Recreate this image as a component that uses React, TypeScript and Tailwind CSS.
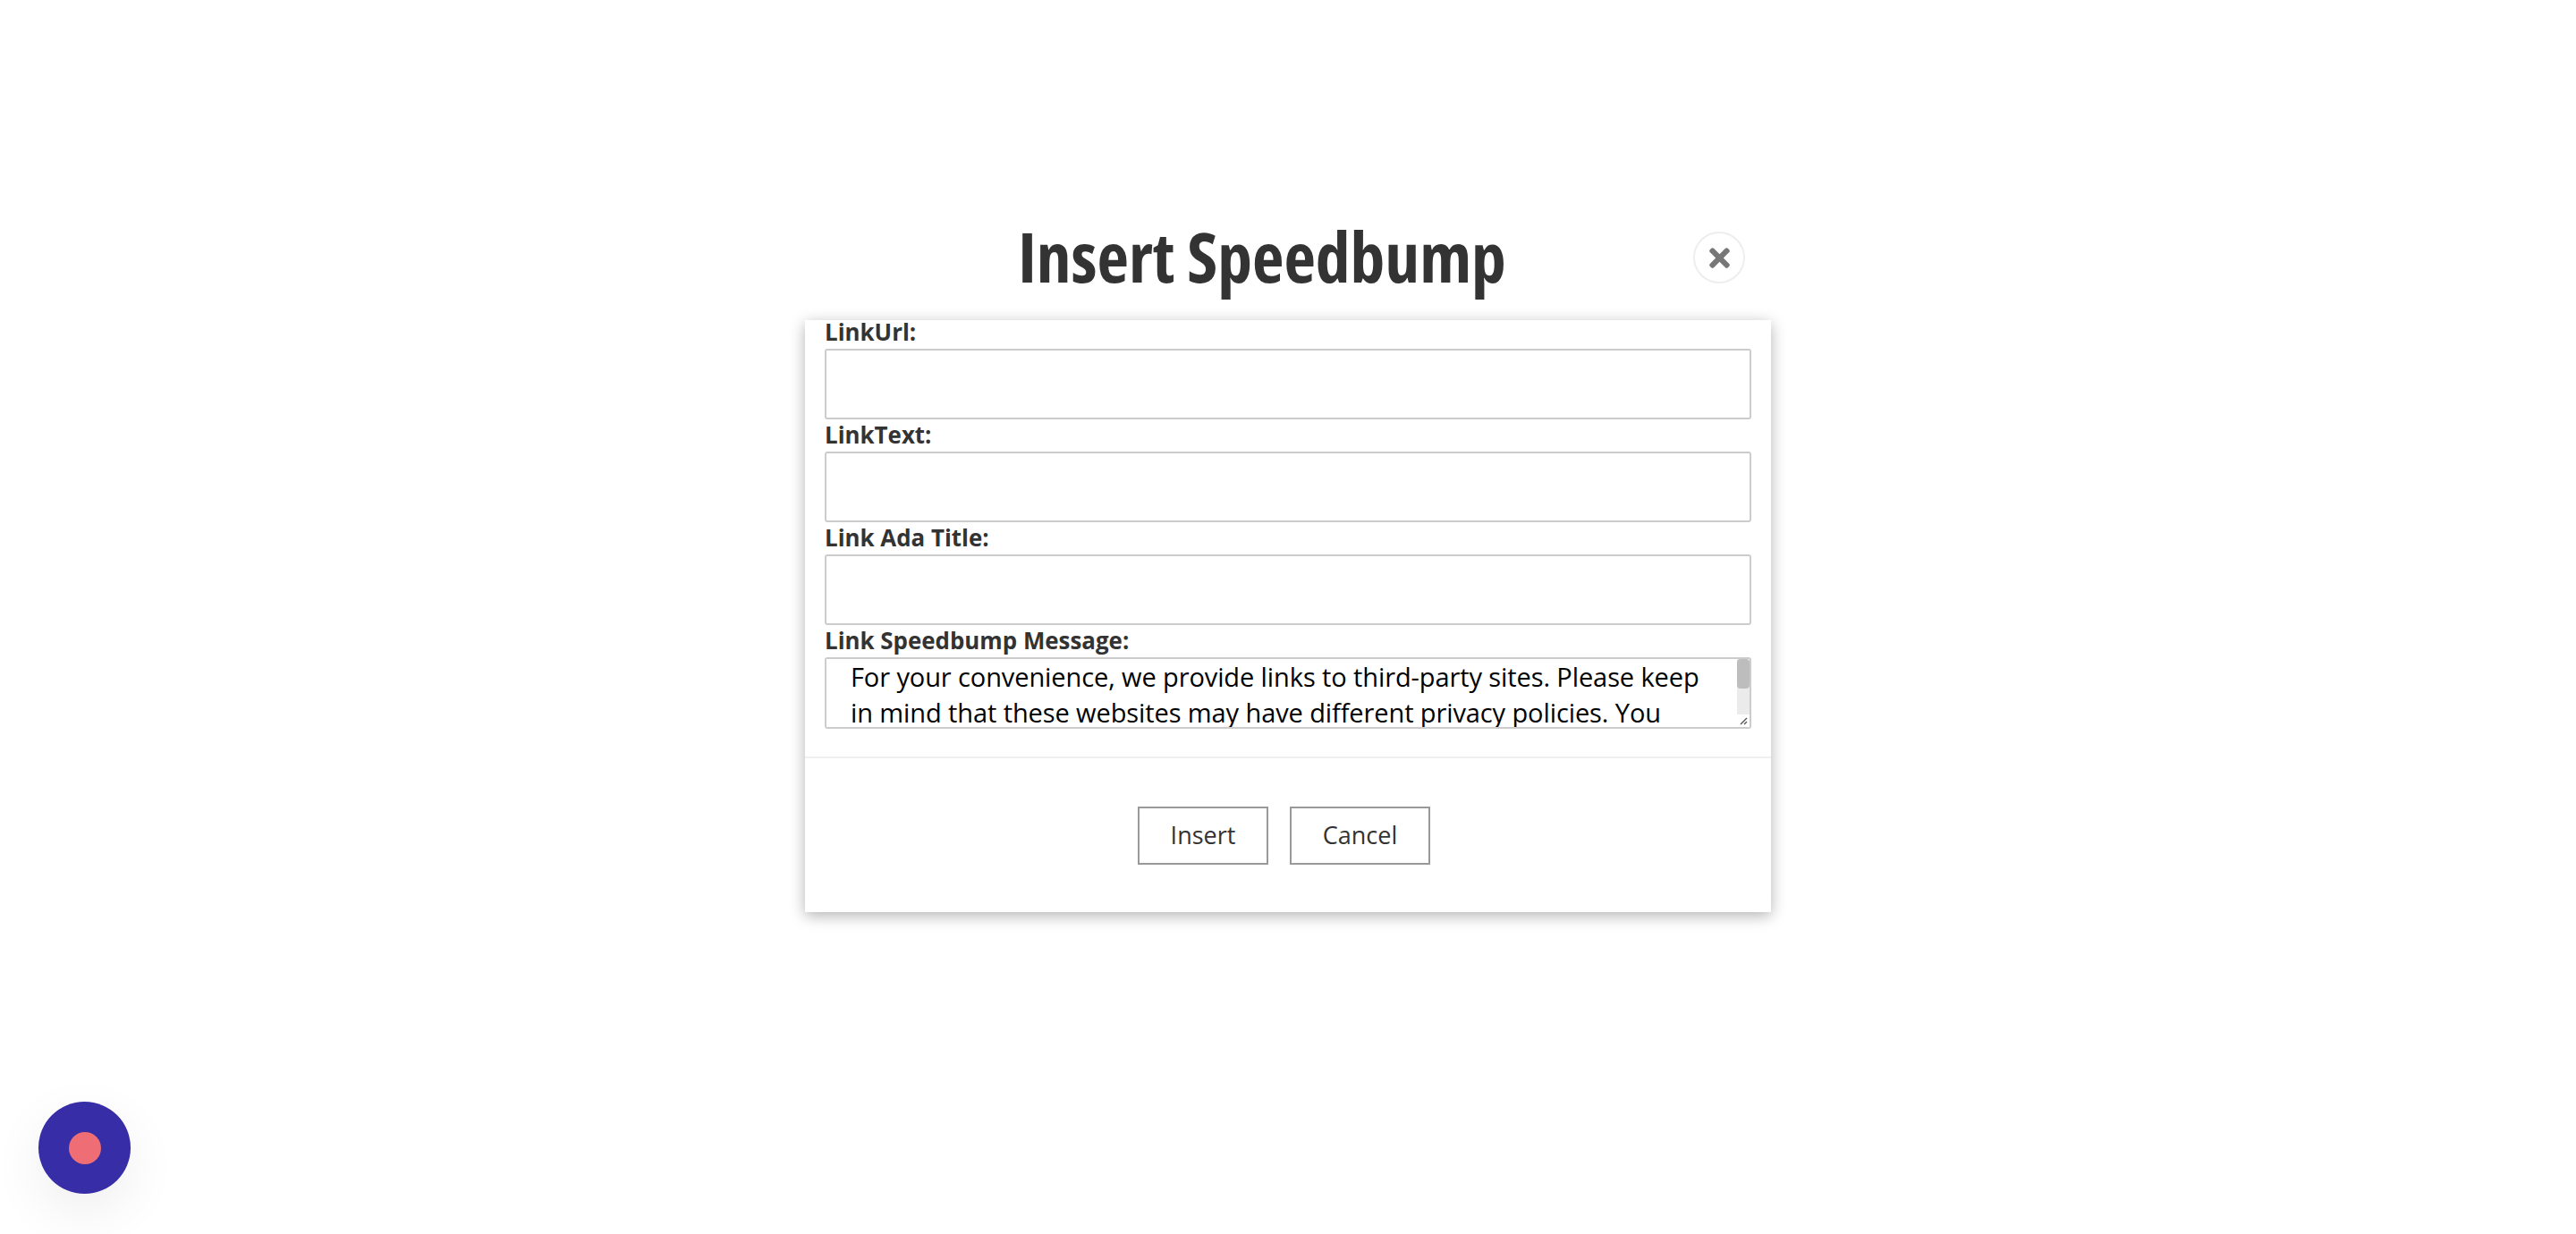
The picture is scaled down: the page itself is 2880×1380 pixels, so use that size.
import { FaTimes } from "react-icons/fa";

const message =
  "For your convenience, we provide links to third-party sites. Please keep in mind that these websites may have different privacy policies. You should review the privacy policy of any third-party site you visit.";

function Field({ label }: { label: string }) {
  return (
    <div className="flex flex-col">
      <label className="h-9 text-[25.9px] leading-[34px] font-bold text-[#333]">{label}</label>
      <input
        type="text"
        className="h-[79px] w-full rounded-[3px] border-2 border-[#ccc] bg-white px-6 text-[28px] outline-none"
      />
    </div>
  );
}

export default function App() {
  return (
    <div className="relative h-[1380px] w-full overflow-hidden bg-white font-['Open_Sans',sans-serif]">
      <div className="mx-auto flex w-[1080px] flex-col pt-[259px]">
        <div className="mb-[41px] flex h-[58px] items-center">
          <h1 className="flex-1 pb-[2px] text-center text-[77.5px] leading-none font-bold whitespace-nowrap text-[#333] [font-stretch:75%]">
            Insert Speedbump
          </h1>
          <button className="mr-[29px] ml-[-29px] flex h-[58px] w-[58px] items-center justify-center rounded-full border-2 border-[#eee] bg-white text-[#777]">
            <FaTimes className="h-[33px] w-[33px]" />
          </button>
        </div>

        <div className="flex flex-col bg-white shadow-[0_4px_16px_rgba(0,0,0,0.3)]">
          <div className="-mt-1 flex flex-col px-[22px] pb-[31px]">
            <Field label="LinkUrl:" />
            <Field label="LinkText:" />
            <Field label="Link Ada Title:" />
            <div className="flex flex-col">
              <label className="h-9 text-[25.9px] leading-[34px] font-bold text-[#333]">
                Link Speedbump Message:
              </label>
              <div className="relative h-[80px] w-full">
                <textarea
                  readOnly
                  value={message}
                  className="block h-[80px] w-full resize-none rounded-[3px] border-2 border-[#ccc] bg-white py-0 pr-[45px] pl-[27px] text-[29px] leading-10 tracking-[-0.1px] text-black outline-none"
                />
                <div className="pointer-events-none absolute top-[2px] right-[2px] bottom-[2px] flex w-[14px] flex-col bg-[#ebebeb]">
                  <div className="h-[33px] rounded-[4px] bg-[#bdbdbd]" />
                  <div className="flex-1" />
                  <div className="flex h-[14px] items-center justify-center bg-white">
                    <svg viewBox="0 0 10 10" className="h-[10px] w-[10px]">
                      <path d="M2 9 9 2M6 9 9 6" stroke="#555" strokeWidth="1.4" fill="none" />
                    </svg>
                  </div>
                </div>
              </div>
            </div>
          </div>
          <div className="flex h-[174px] items-start justify-center gap-6 border-t-2 border-[#f0f0f0] pt-[54px] pr-[9px]">
            <button className="h-[65px] w-[146px] border-2 border-[#999] bg-white text-[27px] text-[#333]">
              Insert
            </button>
            <button className="h-[65px] w-[157px] border-2 border-[#999] bg-white text-[27px] text-[#333]">
              Cancel
            </button>
          </div>
        </div>
      </div>

      <div className="absolute top-[1232px] left-[43px] flex h-[103px] w-[103px] items-center justify-center rounded-full bg-[#372da6] shadow-[0_20px_60px_rgba(0,0,0,0.07)]">
        <div className="h-[36px] w-[36px] rounded-full bg-[#ef6e75]" />
      </div>
    </div>
  );
}
